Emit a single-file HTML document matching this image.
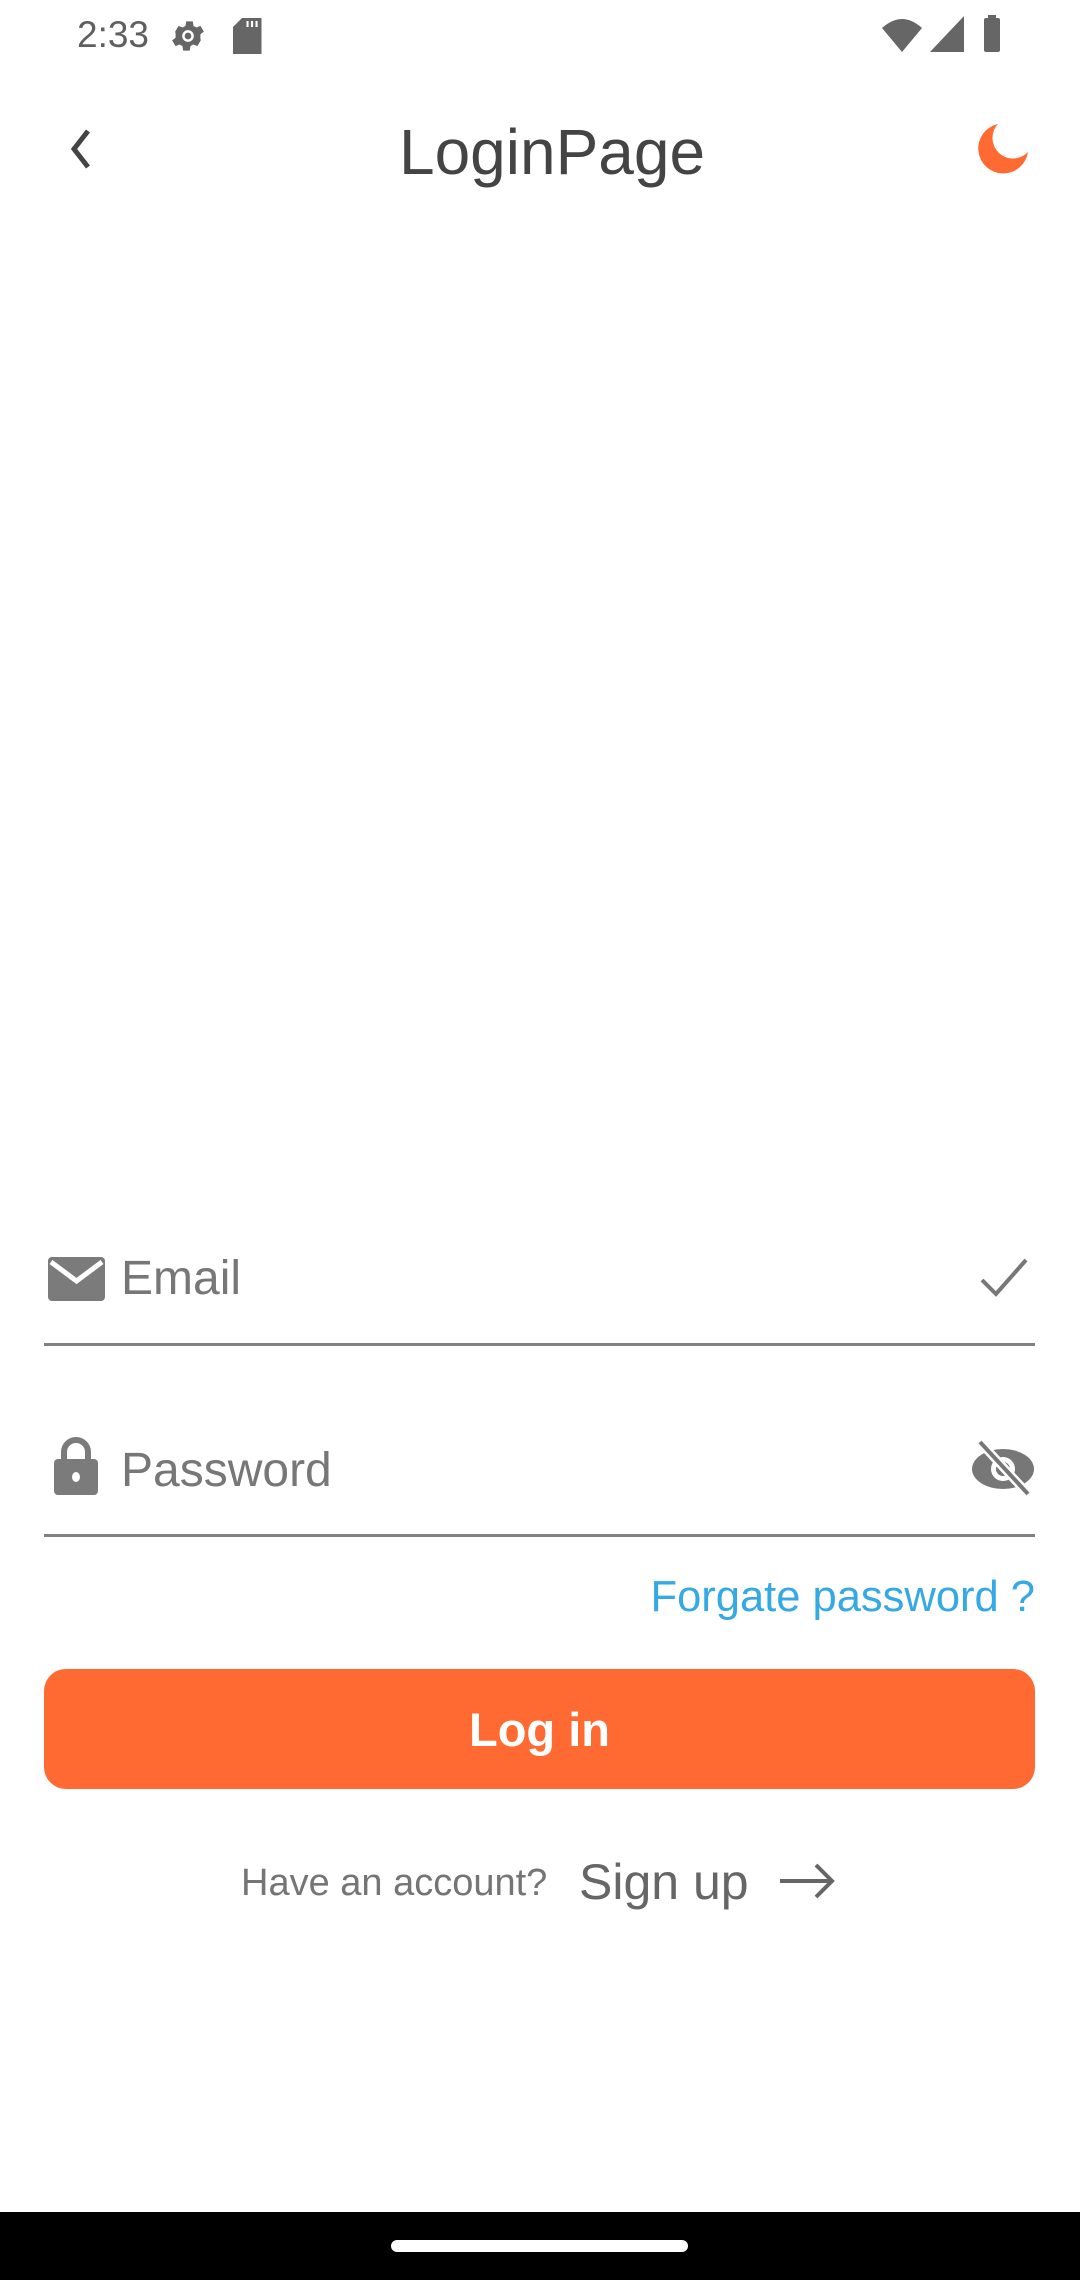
<!DOCTYPE html>
<html><head><meta charset="utf-8"><style>
*{margin:0;padding:0;box-sizing:border-box}
body{width:1080px;height:2280px;background:#fff;position:relative;overflow:hidden;font-family:"Liberation Sans",sans-serif}
.a{position:absolute}
</style></head><body>
<div class="a" style="left:77px;top:14px;font-size:37px;color:#5f5f5f;">2:33</div>
<svg class="a" style="left:168px;top:16px" width="40" height="40" viewBox="0 0 24 24"><path fill="#666" d="M19.4 13c.04-.3.06-.65.06-1s-.02-.7-.07-1l2.1-1.650-2-3.46-2.5 1a7.3 7.3 0 0 0-1.7-1l-.4-2.65h-4l-.38 2.65c-.6.25-1.170.6-1.7 1l-2.5-1-2 3.46L4.6 11c-.04.32-.07.66-.07 1s.02.68.07 1l-2.1 1.65 2 3.46 2.5-1c.52.4 1.08.74 1.7 1l.38 2.65h4l.38-2.65c.6-.25 1.17-.6 1.7-1l2.5 1 2-3.46L19.4 13zM12 15.5a3.5 3.5 0 1 1 0-7 3.5 3.5 0 0 1 0 7z"/><circle cx="12" cy="12" r="2" fill="#666"/></svg>
<svg class="a" style="left:233px;top:18px" width="30" height="36" viewBox="0 0 10 12"><path fill="#666" d="M3 0h6.5v12H0V3z"/><rect x="4.5" y="1" width="0.7" height="2" fill="#fff"/><rect x="6" y="1" width="0.7" height="2" fill="#fff"/><rect x="7.5" y="1" width="0.7" height="2" fill="#fff"/></svg>
<svg class="a" style="left:880px;top:16px" width="44" height="36" viewBox="0 0 44 36"><path fill="#666" d="M2 12 Q22 -6 42 12 L22 36z"/></svg>
<svg class="a" style="left:930px;top:16px" width="34" height="36"><path fill="#666" d="M34 0V36H0z"/></svg>
<svg class="a" style="left:982px;top:15px" width="22" height="37"><rect x="6" y="0" width="8" height="4" fill="#666"/><rect x="2" y="3" width="16" height="34" rx="2" fill="#666"/></svg>

<svg class="a" style="left:66px;top:128px" width="30" height="42" viewBox="0 0 30 42"><path d="M22 3 L8 21 L22 39" fill="none" stroke="#444" stroke-width="5"/></svg>
<div class="a" style="left:0;width:1104px;top:115px;text-align:center;font-size:64px;color:#444;">LoginPage</div>
<svg class="a" style="left:976px;top:122px" width="56" height="54" viewBox="0 0 56 54"><path fill="#ff6a33" d="M22 2 A25 25 0 1 0 52 30 A15 15 0 0 1 22 2z"/></svg>

<svg class="a" style="left:48px;top:1257px" width="57" height="44" viewBox="0 0 57 44"><rect width="57" height="44" rx="4" fill="#7b7b7b"/><path d="M3 5 L28.5 24 L54 5" fill="none" stroke="#fff" stroke-width="5"/></svg>
<div class="a" style="left:121px;top:1251px;font-size:48px;color:#777;">Email</div>
<svg class="a" style="left:978px;top:1256px" width="52" height="44"><path d="M4 24 L18 38 L48 4" fill="none" stroke="#777" stroke-width="4"/></svg>
<div class="a" style="left:44px;top:1343px;width:991px;height:3px;background:#808080"></div>

<svg class="a" style="left:53px;top:1437px" width="46" height="58" viewBox="0 0 46 58"><path d="M11 24V15a12 12 0 0 1 24 0v9" fill="none" stroke="#7b7b7b" stroke-width="6"/><rect x="1" y="22" width="44" height="36" rx="4" fill="#7b7b7b"/><ellipse cx="23" cy="40" rx="4" ry="5" fill="#fff"/></svg>
<div class="a" style="left:121px;top:1443px;font-size:48px;color:#777;">Password</div>
<svg class="a" style="left:970px;top:1440px" width="66" height="56" viewBox="0 0 66 56"><ellipse cx="33" cy="29" rx="31" ry="20" fill="#777"/><circle cx="33" cy="29" r="12" fill="#fff"/><circle cx="33" cy="29" r="7" fill="#777"/><path d="M10 2 L58 54" stroke="#fff" stroke-width="9"/><path d="M10 2 L58 54" stroke="#777" stroke-width="4"/></svg>
<div class="a" style="left:44px;top:1534px;width:991px;height:3px;background:#808080"></div>

<div class="a" style="right:45px;top:1573px;font-size:43.5px;color:#35a9e3;">Forgate password ?</div>
<div class="a" style="left:44px;top:1669px;width:991px;height:120px;background:#ff6a33;border-radius:22px;color:#fff;font-size:47px;font-weight:bold;text-align:center;line-height:122px;">Log in</div>
<div class="a" style="left:241px;top:1862px;font-size:38px;color:#757575;">Have an account?</div>
<div class="a" style="left:579px;top:1853px;font-size:50px;color:#666;">Sign up</div>
<svg class="a" style="left:778px;top:1862px" width="58" height="38"><path d="M2 19H54M38 3L54 19L38 35" fill="none" stroke="#666" stroke-width="4"/></svg>

<div class="a" style="left:0;top:2212px;width:1080px;height:68px;background:#000"></div>
<div class="a" style="left:391px;top:2240px;width:297px;height:12px;border-radius:6px;background:#fff"></div>
</body></html>
